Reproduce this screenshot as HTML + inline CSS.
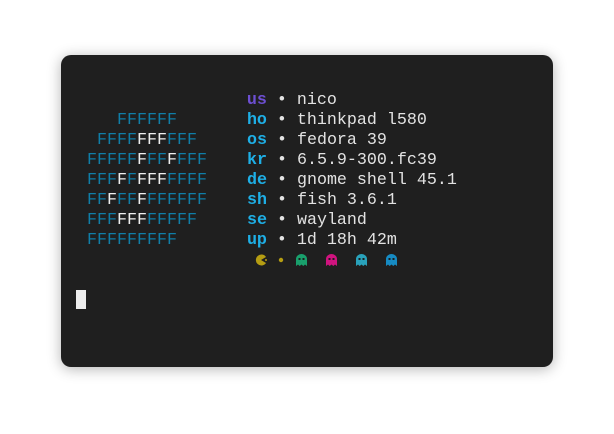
<!DOCTYPE html><html><head><style>
html,body{margin:0;width:614px;height:434px;background:#fff;overflow:hidden}
.card{position:absolute;left:61px;top:55px;width:492px;height:312px;background:#1f1f1f;border-radius:10px;box-shadow:0 2px 14px rgba(0,0,0,.3)}
pre{position:absolute;left:77px;top:91px;margin:0;font-family:"Liberation Mono",monospace;font-size:16.67px;line-height:20px;color:#e2e2e2}
.b{color:#0f7ea8}.w{color:#efefef}.c{color:#1eafe6;font-weight:bold}.p{color:#6d4fd2;font-weight:bold}
.cur{position:absolute;left:76px;top:290px;width:10px;height:19px;background:#eee}
svg{position:absolute}
</style></head><body>
<div class="card"></div>
<pre>                 <span class="p">us</span> • nico
    <span class="b">FFFFFF</span>       <span class="c">ho</span> • thinkpad l580
  <span class="b">FFFF</span><span class="w">FFF</span><span class="b">FFF</span>     <span class="c">os</span> • fedora 39
 <span class="b">FFFFF</span><span class="w">F</span><span class="b">FF</span><span class="w">F</span><span class="b">FFF</span>    <span class="c">kr</span> • 6.5.9-300.fc39
 <span class="b">FFF</span><span class="w">F</span><span class="b">F</span><span class="w">FFF</span><span class="b">FFFF</span>    <span class="c">de</span> • gnome shell 45.1
 <span class="b">FF</span><span class="w">F</span><span class="b">FF</span><span class="w">F</span><span class="b">FFFFFF</span>    <span class="c">sh</span> • fish 3.6.1
 <span class="b">FFF</span><span class="w">FFF</span><span class="b">FFFFF</span>     <span class="c">se</span> • wayland
 <span class="b">FFFFFFFFF</span>       <span class="c">up</span> • 1d 18h 42m</pre>
<svg style="left:255px;top:254px" width="12" height="12"><path d="M6 6 L11 3 A5.5 5.5 0 1 0 11 9 Z" fill="#b59d12"/><circle cx="11" cy="6" r="1" fill="#b59d12"/></svg>
<svg style="left:278px;top:257px" width="6" height="6"><circle cx="3" cy="3" r="2.2" fill="#b59d12"/></svg>
<svg style="left:296px;top:254px" width="11" height="12"><path d="M0 12V5A5.5 5 0 0 1 11 5V12L9 10.5 7.3 12 5.5 10.5 3.7 12 2 10.5Z" fill="#19a06c"/><rect x="2.5" y="4" width="2" height="2" fill="#1f1f1f"/><rect x="6.5" y="4" width="2" height="2" fill="#1f1f1f"/></svg>
<svg style="left:326px;top:254px" width="11" height="12"><path d="M0 12V5A5.5 5 0 0 1 11 5V12L9 10.5 7.3 12 5.5 10.5 3.7 12 2 10.5Z" fill="#d0137f"/><rect x="2.5" y="4" width="2" height="2" fill="#1f1f1f"/><rect x="6.5" y="4" width="2" height="2" fill="#1f1f1f"/></svg>
<svg style="left:356px;top:254px" width="11" height="12"><path d="M0 12V5A5.5 5 0 0 1 11 5V12L9 10.5 7.3 12 5.5 10.5 3.7 12 2 10.5Z" fill="#29a2bb"/><rect x="2.5" y="4" width="2" height="2" fill="#1f1f1f"/><rect x="6.5" y="4" width="2" height="2" fill="#1f1f1f"/></svg>
<svg style="left:386px;top:254px" width="11" height="12"><path d="M0 12V5A5.5 5 0 0 1 11 5V12L9 10.5 7.3 12 5.5 10.5 3.7 12 2 10.5Z" fill="#168bc3"/><rect x="2.5" y="4" width="2" height="2" fill="#1f1f1f"/><rect x="6.5" y="4" width="2" height="2" fill="#1f1f1f"/></svg>
<div class="cur"></div>
</body></html>
